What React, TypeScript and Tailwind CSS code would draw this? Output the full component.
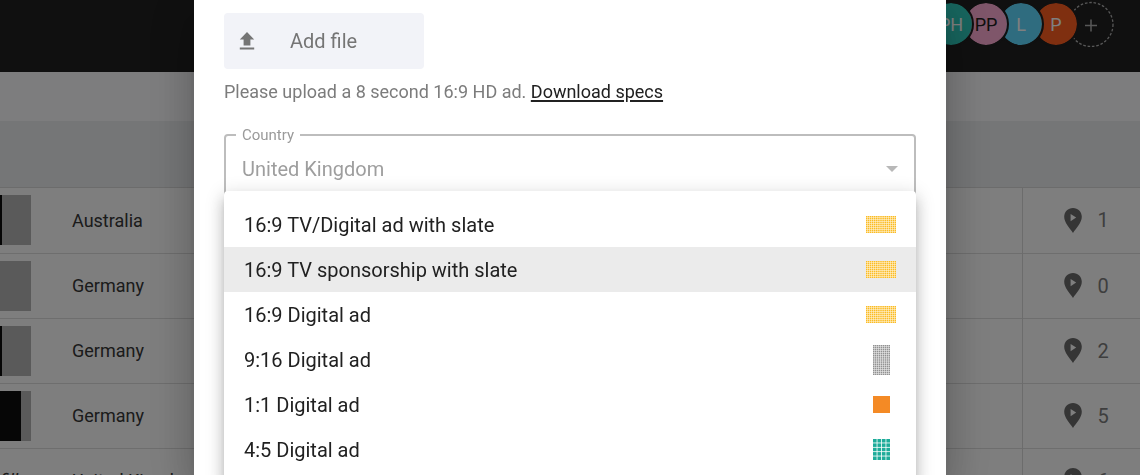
import React from "react";
import { clsx } from "clsx";

const avatars = [
  { initials: "PH", className: "z-40 bg-[#2ecabc] text-white" },
  { initials: "PP", className: "z-30 bg-[#ffacd4] text-[#202020]" },
  { initials: "L", className: "z-20 bg-[#5ed8ff] text-white" },
  { initials: "P", className: "z-10 bg-[#ff5e20] text-white" },
];

const rows = [
  { country: "Australia", count: 1, bar: "w-[2px]" },
  { country: "Germany", count: 0, bar: "w-0" },
  { country: "Germany", count: 2, bar: "w-[2px]" },
  { country: "Germany", count: 5, bar: "w-[21px]" },
  { country: "United Kingdom", count: 6, label: "fill" },
];

const formats = [
  { name: "16:9 TV/Digital ad with slate", cols: 16, rows: 9, width: 30, height: 17, color: "#fbbc24" },
  { name: "16:9 TV sponsorship with slate", cols: 16, rows: 9, width: 30, height: 17, color: "#fbbc24" },
  { name: "16:9 Digital ad", cols: 16, rows: 9, width: 30, height: 17, color: "#fbbc24" },
  { name: "9:16 Digital ad", cols: 9, rows: 16, width: 17, height: 30, color: "#929292" },
  { name: "1:1 Digital ad", cols: 1, rows: 1, width: 17, height: 17, color: "#f48a25" },
  { name: "4:5 Digital ad", cols: 4, rows: 5, width: 17, height: 21, color: "#1dac9a" },
];

/** Small grid with as many cells as the aspect ratio names. */
function RatioIcon({ cols, rows, width, height, color }: {
  cols: number;
  rows: number;
  width: number;
  height: number;
  color: string;
}) {
  const gap = cols > 1 ? (cols > 4 ? 0.4 : 0.8) : 0;
  const cellW = (width - gap * (cols - 1)) / cols;
  const cellH = (height - gap * (rows - 1)) / rows;

  return (
    <svg width={width} height={height} viewBox={`0 0 ${width} ${height}`} aria-hidden="true">
      <rect width={width} height={height} fill="#fff" />
      {Array.from({ length: cols * rows }, (_, i) => (
        <rect
          key={i}
          x={(i % cols) * (cellW + gap)}
          y={Math.floor(i / cols) * (cellH + gap)}
          width={cellW}
          height={cellH}
          fill={color}
        />
      ))}
    </svg>
  );
}

function PinIcon() {
  return (
    <svg width="18" height="25" viewBox="0 0 18 25" fill="currentColor" aria-hidden="true">
      <path
        fillRule="evenodd"
        d="M9 0C4 0 .2 3.9.2 8.800c0 5.900 5.600 11.400 8.800 16.200 3.200-4.800 8.800-10.300 8.800-16.200C17.800 3.900 14 0 9 0ZM6.600 6v7.200L12.200 9.600Z"
      />
    </svg>
  );
}

function UploadIcon() {
  return (
    <svg width="16" height="18" viewBox="0 0 16 18" fill="currentColor" aria-hidden="true">
      <path d="M8 0 .8 7.500H4.600V13.500H11.400V7.500H15.200ZM.8 15.500H15.200V17.500H.8Z" />
    </svg>
  );
}

function Header() {
  return (
    <header className="flex h-[72px] items-start justify-end bg-[#202020] pt-px pr-[26px]">
      <div className="isolate flex">
        {avatars.map((avatar) => (
          <span
            key={avatar.initials}
            className={clsx(
              "relative -mr-[11px] flex size-[46px] items-center justify-center rounded-full border-2 border-[#202020] bg-clip-padding text-[18px]",
              avatar.className,
            )}
          >
            {avatar.initials}
          </span>
        ))}
        <button
          type="button"
          aria-label="Add person"
          className="flex size-[46px] items-center justify-center text-[#b0b0b0]"
        >
          <svg width="46" height="46" viewBox="0 0 46 46" fill="none" stroke="currentColor" aria-hidden="true">
            <circle cx="23" cy="23.500" r="22" strokeWidth="1.300" strokeDasharray="2.600 1.800" />
            <path d="M17 24.500H29M23 18.500V30.500" strokeWidth="1.500" />
          </svg>
        </button>
      </div>
    </header>
  );
}

function CampaignTable() {
  return (
    <table className="w-full table-fixed border-collapse text-left">
      <colgroup>
        <col className="w-[72px]" />
        <col />
        <col className="w-[118px]" />
      </colgroup>
      <tbody>
        {rows.map((row, i) => (
          <tr key={i} className="h-[65px] border-b border-[#dcdcdc]">
            <td className="p-0">
              {row.bar ? (
                <div className="h-[50px] w-[31px] bg-[#b4b4b4]">
                  <div className={clsx("h-full bg-[#0c0c0c]", row.bar)} />
                </div>
              ) : (
                <span className="text-[18px] italic text-[#363636]">{row.label}</span>
              )}
            </td>
            <td className="p-0 text-[18px] text-[#363636]">{row.country}</td>
            <td className="border-l border-[#d8d8d8] p-0 pl-[41px]">
              <span className="flex items-center gap-4 text-[20px] text-[#7c7c7c]">
                <span className="text-[#6a6a6a]">
                  <PinIcon />
                </span>
                {row.count}
              </span>
            </td>
          </tr>
        ))}
      </tbody>
    </table>
  );
}

function FormatMenu() {
  return (
    <div
      role="listbox"
      aria-label="Ad format"
      className="absolute inset-x-0 top-[66px] rounded-[4px] bg-white py-[11px] shadow-[0_6px_6px_-3px_rgba(0,0,0,0.2),0_10px_14px_1px_rgba(0,0,0,0.14),0_4px_18px_3px_rgba(0,0,0,0.12)]"
    >
      {formats.map(({ name, ...icon }, i) => (
        <button
          key={name}
          type="button"
          role="option"
          aria-selected={i === 1}
          className={clsx(
            "flex h-[45px] w-full items-center justify-between px-5 text-[20px] text-[#212121]",
            i === 1 && "bg-[#ebebeb]",
          )}
        >
          {name}
          <span className="flex w-[30px] justify-center">
            <RatioIcon {...icon} />
          </span>
        </button>
      ))}
    </div>
  );
}

function UploadDialog() {
  return (
    <div className="fixed inset-0 flex justify-center bg-black/50">
      <div
        role="dialog"
        aria-label="Upload ad"
        className="w-full max-w-[752px] bg-white px-[30px] pt-[13px] shadow-[0_11px_15px_-7px_rgba(0,0,0,0.2),0_24px_38px_3px_rgba(0,0,0,0.14),0_9px_46px_8px_rgba(0,0,0,0.12)]"
      >
        <button
          type="button"
          className="flex h-[56px] w-[200px] items-center rounded-[4px] bg-[#f2f3f8] px-[15px] text-[20px] text-[#757575]"
        >
          <UploadIcon />
          <span className="ml-[35px]">Add file</span>
        </button>
        <p className="mt-[9px] text-[18px] leading-7 text-[#7c7c7c]">
          Please upload a 8 second 16:9 HD ad.{" "}
          <a href="#specs" className="text-[#212121] underline decoration-2 underline-offset-2">
            Download specs
          </a>
        </p>
        <div className="relative mt-[19px]">
          <fieldset className="h-[86px] rounded-[4px] border-2 border-[#bdbdbd] px-[10px]">
            <legend className="px-[6px] text-[15px] leading-5 text-[#9a9a9a]">
              <label htmlFor="country">Country</label>
            </legend>
            <div className="flex items-center pt-[9px] pr-[6px] pl-[6px]">
              <select
                id="country"
                disabled
                className="h-[30px] flex-1 appearance-none bg-transparent text-[20px] text-[#9e9e9e] opacity-100"
              >
                <option>United Kingdom</option>
              </select>
              <svg width="12" height="6" viewBox="0 0 12 6" fill="#b8b8b8" aria-hidden="true">
                <path d="M0 0H12L6 6Z" />
              </svg>
            </div>
          </fieldset>
          <FormatMenu />
        </div>
      </div>
    </div>
  );
}

export default function App() {
  return (
    <div className="relative h-screen overflow-hidden bg-[#fdfdfd] font-['Roboto',sans-serif]">
      <Header />
      <div className="h-[49px] bg-[#fafbfd]" />
      <div className="h-[67px] border-b border-[#d8d8d8] bg-[#ebedef]" />
      <CampaignTable />
      <UploadDialog />
    </div>
  );
}
